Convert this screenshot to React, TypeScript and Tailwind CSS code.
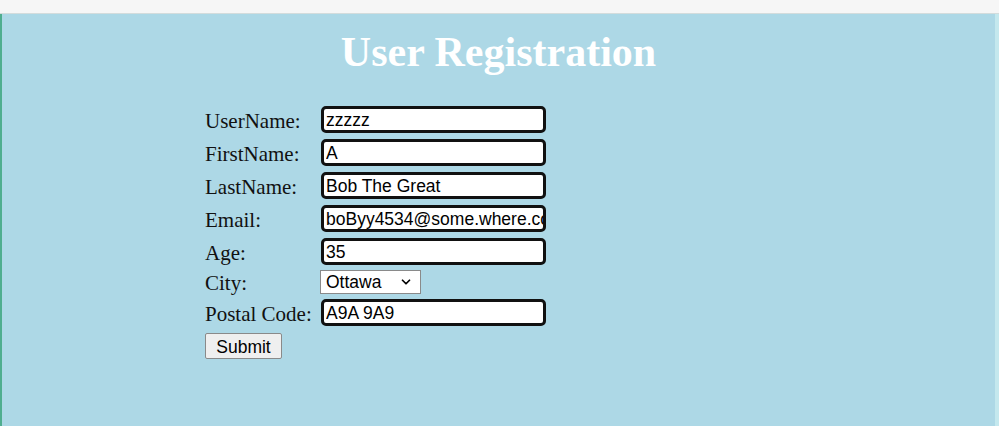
import { ChevronDown } from "lucide-react";

const FIELDS: { label: string; value: string }[] = [
  { label: "UserName:", value: "zzzzz" },
  { label: "FirstName:", value: "A" },
  { label: "LastName:", value: "Bob The Great" },
  { label: "Email:", value: "boByy4534@some.where.com" },
  { label: "Age:", value: "35" },
];

function TextBox({ value }: { value: string }) {
  return (
    <input
      readOnly
      value={value}
      className="h-[27px] w-[225px] rounded-[5px] border-[3px] border-[#111] bg-white pl-[2px] pt-[1px] font-['Liberation_Sans',Arial,sans-serif] text-[17.5px] text-black outline-none"
    />
  );
}

function Row({ label, children, tall = true }: { label: string; children: React.ReactNode; tall?: boolean }) {
  return (
    <div className={tall ? "flex h-[33px] items-center" : "flex h-[28px] items-center"}>
      <span className="w-[116px] shrink-0 pt-[3px] text-[21px] leading-none text-[#111]">{label}</span>
      {children}
    </div>
  );
}

export default function App() {
  return (
    <div className="flex h-[426px] w-full flex-col font-['Liberation_Serif','Times_New_Roman',serif]">
      {/* browser strip */}
      <div className="h-[14px] shrink-0 border-b border-[#d3dcdc] bg-[#f6f6f6]" />

      <div className="flex min-h-0 flex-1 border-l-2 border-[#4fae8f] bg-[#add8e6]">
        <div className="flex flex-1 flex-col pt-[17px]">
          <h1 className="h-[42px] text-center text-[42px] font-bold leading-none text-white">User Registration</h1>

          <div className="ml-[203px] mt-[30px] flex flex-col">
            {FIELDS.map((f) => (
              <Row key={f.label} label={f.label}>
                <TextBox value={f.value} />
              </Row>
            ))}
            <Row label="City:" tall={false}>
              <div className="-ml-[1px] flex h-[24px] w-[101px] items-center justify-between border border-[#8a8a8a] bg-white pl-[5px] pr-[7px] font-['Liberation_Sans',Arial,sans-serif] text-[17.5px] text-black">
                <span>Ottawa</span>
                <ChevronDown size={14} strokeWidth={3} />
              </div>
            </Row>
            <Row label="Postal Code:">
              <TextBox value="A9A 9A9" />
            </Row>
            <div className="flex h-[33px] items-center">
              <button className="h-[26px] w-[77px] rounded-[2px] border border-[#8a8a8a] bg-[#efefef] font-['Liberation_Sans',Arial,sans-serif] text-[17.5px] text-black">
                Submit
              </button>
            </div>
          </div>
        </div>
        <div className="w-[4px] bg-[#c4e8ee]" />
      </div>
    </div>
  );
}
